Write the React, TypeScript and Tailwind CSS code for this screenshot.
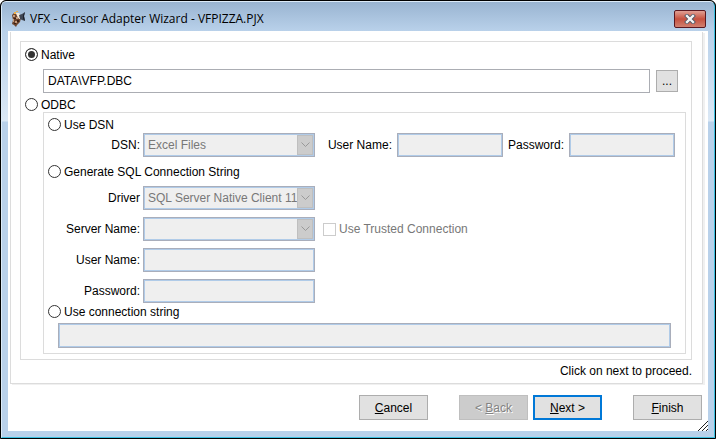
import { useState } from "react"
import type { ComponentProps, ReactNode } from "react"

const fieldClass =
  "block min-w-0 border border-[#a9aebb] bg-[#efefef] px-1 text-[#787878] shadow-[inset_0_0_0_1px_#b0cbe8] outline-none"

function Radio({ label, ...props }: { label: string } & ComponentProps<"input">) {
  return (
    <label className="flex h-[15px] items-center gap-[3px] leading-4 whitespace-nowrap">
      <input
        type="radio"
        className="size-[13px] shrink-0 appearance-none rounded-full border border-[#333] bg-white checked:bg-[#333] checked:shadow-[inset_0_0_0_2px_white]"
        {...props}
      />
      {label}
    </label>
  )
}

function Row({ id, label, children }: { id: string; label: string; children: ReactNode }) {
  return (
    <div className="flex items-center gap-[3px]">
      <label htmlFor={id} className="w-24 shrink-0 text-right">
        {label}
      </label>
      {children}
    </div>
  )
}

function Combo({ id, value }: { id: string; value: string }) {
  return (
    <div className="relative w-[172px] shrink-0">
      <select id={id} disabled className={`${fieldClass} h-6 w-full appearance-none pr-4 opacity-100`}>
        <option>{value}</option>
      </select>
      <span className="pointer-events-none absolute inset-y-0.5 right-0.5 flex w-4 items-center justify-center border border-[#bfbfbf] bg-[#ccc]">
        <svg width="9" height="6" viewBox="0 0 9 6" fill="none" stroke="#999">
          <path d="M0.5 0.5 4.5 4.5 8.5 0.5" />
        </svg>
      </span>
    </div>
  )
}

function WizardButton({ className = "border border-[#adadad] bg-[#e1e1e1]", ...props }: ComponentProps<"button">) {
  return <button type="button" className={`h-[25px] w-[69px] ${className}`} {...props} />
}

function FoxIcon() {
  return (
    <svg width="15" height="17" viewBox="0 0 15 17" className="shrink-0">
      <path d="M1 5 3 3 5 4 8 5 10 8 9 12 6 15 5 17 3 15 1 14 2 10Z" fill="#6b432c" />
      <path d="M2 5h2v2H2zM5 7h2v2H5zM2 9h1v3H2zM4 11h2v2H4z" fill="#c39a7c" />
      <path d="M3 8h2v1H3zM6 10h2v2H6zM3 13h2v1H3z" fill="#3a2014" />
      <path d="M3 2h2v2H3zM5 1h2v1H5z" fill="#efb04a" />
      <path d="M5 3h3l2 3v3H8L6 6Z" fill="#f6ead8" />
      <path d="M8 5 11 4 14 2 13 6 14 11 11 10 9 9Z" fill="#3f4654" />
      <path d="M14 2 13 6 14 11 12 9 12 5Z" fill="#1d212b" />
    </svg>
  )
}

export default function App() {
  const [source, setSource] = useState("native")

  return (
    <div className="flex min-h-screen flex-col overflow-hidden rounded-t-md border border-black bg-black font-['Liberation_Sans',Arial,sans-serif] text-[12px] leading-4 text-black">
      <div className="flex flex-1 flex-col rounded-t-[5px] border border-t-[#dcebf8] border-r-[#3cc0e0] border-b-[#3cc0e0] border-l-[#dcebf8] bg-[linear-gradient(#99b4d1_0px,#b9d1ea_29px,#dbe8f5_119px,#b9d1ea_120px)] px-1.5 pb-1.5">
        <header className="flex h-[29px] items-center gap-1 pt-1 pr-0.5 pl-[3px]">
          <FoxIcon />
          <h1 className="flex-1 font-['Open_Sans',sans-serif] text-[12px]">
            VFX - Cursor Adapter Wizard - VFPIZZA.PJX
          </h1>
          <button
            type="button"
            aria-label="Close"
            className="flex h-[18px] w-8 items-center justify-center rounded-xs border border-[#5a1820] bg-linear-to-b from-[#e0a095] via-[#c5503f] to-[#d08070]"
          >
            <svg width="12" height="10" viewBox="0 0 12 10" strokeLinecap="square">
              <path d="M3 2 9 8M9 2 3 8" stroke="#4b5563" strokeWidth="4" />
              <path d="M3 2 9 8M9 2 3 8" stroke="#f4f4f4" strokeWidth="2.4" />
            </svg>
          </button>
        </header>

        <main className="flex-1 bg-white pt-px">
          <div className="mr-[5px] ml-0.5 border border-t-0 border-[#dcdcdc] pt-[9px] pr-2.5 pb-1 pl-[9px] shadow-[2px_1px_0_#f0f0f0]">
            <div className="border border-[#dcdcdc] pt-[5px] pb-[5px] pl-1">
              <Radio
                name="source"
                label="Native"
                checked={source === "native"}
                onChange={() => setSource("native")}
              />
              <div className="mt-[7px] mr-[13px] ml-[18px] flex items-center gap-1.5">
                <input
                  aria-label="Database"
                  defaultValue="DATA\VFP.DBC"
                  className="h-6 min-w-0 flex-1 border border-[#abadb3] bg-white px-1 outline-none"
                />
                <button
                  type="button"
                  aria-label="Browse"
                  className="h-[22px] w-[22px] border border-[#adadad] bg-[#e1e1e1]"
                >
                  ...
                </button>
              </div>
              <div className="mt-1">
                <Radio
                  name="source"
                  label="ODBC"
                  checked={source === "odbc"}
                  onChange={() => setSource("odbc")}
                />
              </div>

              <div className="mr-[5px] ml-[18px] border border-[#dcdcdc] pt-1 pb-[5px]">
                <div className="pl-1">
                  <Radio name="odbc" label="Use DSN" />
                </div>
                <div className="mt-px flex items-center justify-between pr-2.5">
                  <Row id="dsn" label="DSN:">
                    <Combo id="dsn" value="Excel Files" />
                  </Row>
                  <div className="flex items-center">
                    <label htmlFor="dsn-user">User Name:</label>
                    <input id="dsn-user" disabled className={`${fieldClass} ml-[5px] h-6 w-[106px]`} />
                    <label htmlFor="dsn-password" className="ml-[5px]">
                      Password:
                    </label>
                    <input
                      id="dsn-password"
                      type="password"
                      disabled
                      className={`${fieldClass} ml-[5px] h-6 w-[106px]`}
                    />
                  </div>
                </div>
                <div className="mt-[7px] pl-1">
                  <Radio name="odbc" label="Generate SQL Connection String" />
                </div>
                <div className="mt-[7px] flex flex-col gap-[7px]">
                  <Row id="driver" label="Driver">
                    <Combo id="driver" value="SQL Server Native Client 11" />
                  </Row>
                  <Row id="server" label="Server Name:">
                    <Combo id="server" value="" />
                    <label className="ml-[5px] flex items-center gap-[3px] text-[#787878]">
                      <input
                        type="checkbox"
                        disabled
                        className="size-[13px] appearance-none border border-[#ccc] bg-white"
                      />
                      Use Trusted Connection
                    </label>
                  </Row>
                  <Row id="user" label="User Name:">
                    <input id="user" disabled className={`${fieldClass} h-6 w-[172px]`} />
                  </Row>
                  <Row id="password" label="Password:">
                    <input id="password" type="password" disabled className={`${fieldClass} h-6 w-[172px]`} />
                  </Row>
                </div>
                <div className="mt-px pl-1">
                  <Radio name="odbc" label="Use connection string" />
                </div>
                <div className="mt-1 px-3.5">
                  <input
                    aria-label="Connection string"
                    disabled
                    className={`${fieldClass} h-[25px] w-full`}
                  />
                </div>
              </div>
            </div>
            <p className="mt-[3px] text-right">Click on next to proceed.</p>
          </div>

          <footer className="relative flex justify-end pt-[11px] pr-1.5 pb-[11px]">
            <WizardButton>
              <u>C</u>ancel
            </WizardButton>
            <div className="mx-[31px] flex gap-[5px]">
              <WizardButton
                disabled
                className="border border-[#bfbfbf] bg-[#ccc] text-[#838383] [text-shadow:1px_1px_white]"
              >
                &lt; <u>B</u>ack
              </WizardButton>
              <WizardButton className="border-2 border-[#0078d7] bg-[#e1e1e1]">
                <u>N</u>ext &gt;
              </WizardButton>
            </div>
            <WizardButton>
              <u>F</u>inish
            </WizardButton>
            <svg className="absolute right-0 bottom-0" width="11" height="11" viewBox="0 0 11 11" stroke="#222">
              <path d="M1 11 11 1M5 11 11 5M9 11 11 9" />
            </svg>
          </footer>
        </main>
      </div>
    </div>
  )
}
